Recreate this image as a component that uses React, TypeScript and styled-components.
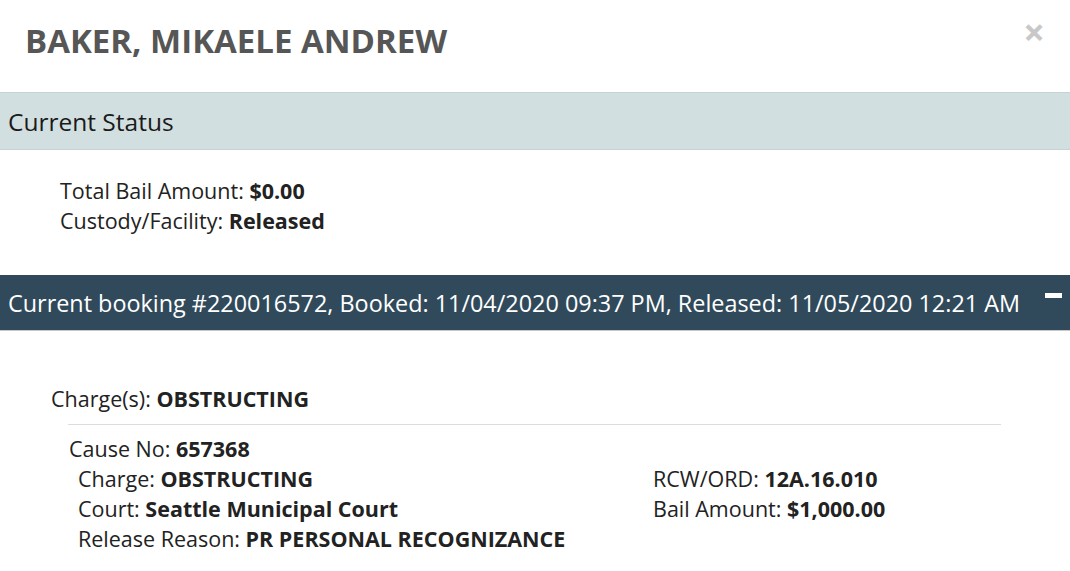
import styled, { createGlobalStyle } from 'styled-components';

const GlobalStyle = createGlobalStyle`
  html, body {
    margin: 0;
    padding: 0;
    background: #ffffff;
  }
  body {
    font-family: 'Open Sans', 'DejaVu Sans', sans-serif;
    color: #222222;
  }
`;

const Modal = styled.div`
  width: 1070px;
  height: 571px;
  overflow: hidden;
  background: #ffffff;
`;

const Header = styled.header`
  height: 93px;
  display: flex;
  align-items: center;
  justify-content: space-between;
  padding: 0 25px;
  box-sizing: border-box;
  border-bottom: 1px solid #c5d3d4;
`;

const Title = styled.h1`
  margin: 0 0 11px 0;
  font-size: 33px;
  font-weight: 700;
  color: #565656;
`;

const Close = styled.button`
  border: 0;
  background: none;
  padding: 0;
  margin: 0 0 30px 0;
  font-family: 'Open Sans', sans-serif;
  font-size: 38px;
  font-weight: 700;
  line-height: 1;
  color: #c8c8c8;
  cursor: pointer;
`;

const SectionBar = styled.div<{ $dark?: boolean }>`
  display: flex;
  align-items: center;
  justify-content: space-between;
  box-sizing: border-box;
  height: ${({ $dark }) => ($dark ? '56px' : '57px')};
  padding: 0 8px;
  background: ${({ $dark }) => ($dark ? '#304a5b' : '#d2dfe0')};
  color: ${({ $dark }) => ($dark ? '#ffffff' : '#1a1a1a')};
  border-bottom: 1px solid ${({ $dark }) => ($dark ? '#c8c8c8' : '#c5d3d4')};
  font-size: ${({ $dark }) => ($dark ? '23.4px' : '24.5px')};
`;

const Minus = styled.span`
  display: block;
  width: 17px;
  height: 5px;
  margin: 0 0 14px 0;
  background: #ffffff;
`;

const StatusBody = styled.div`
  height: 125px;
  padding: 26px 0 0 60px;
  box-sizing: border-box;
`;

const Line = styled.div`
  font-size: 21.5px;
  line-height: 30px;

  b {
    font-weight: 700;
  }
`;

const BookingBody = styled.div`
  padding: 53px 0 0 51px;
`;

const Divider = styled.hr`
  margin: 10px 0 9px 17px;
  width: 933px;
  border: 0;
  border-top: 1px solid #dddddd;
`;

const CauseBlock = styled.div`
  padding-left: 18px;
`;

const Columns = styled.div`
  display: grid;
  grid-template-columns: 575px 1fr;
  padding-left: 9px;
`;

const Column = styled.div``;

export default function App() {
  return (
    <Modal>
      <GlobalStyle />
      <Header>
        <Title>BAKER, MIKAELE ANDREW</Title>
        <Close aria-label="Close">×</Close>
      </Header>
      <SectionBar>Current Status</SectionBar>
      <StatusBody>
        <Line>
          Total Bail Amount: <b>$0.00</b>
        </Line>
        <Line>
          Custody/Facility: <b>Released</b>
        </Line>
      </StatusBody>
      <SectionBar $dark>
        <span>
          Current booking #220016572, Booked: 11/04/2020 09:37 PM, Released:
          11/05/2020 12:21 AM
        </span>
        <Minus />
      </SectionBar>
      <BookingBody>
        <Line>
          Charge(s): <b>OBSTRUCTING</b>
        </Line>
        <Divider />
        <CauseBlock>
          <Line>
            Cause No: <b>657368</b>
          </Line>
          <Columns>
            <Column>
              <Line>
                Charge: <b>OBSTRUCTING</b>
              </Line>
              <Line>
                Court: <b>Seattle Municipal Court</b>
              </Line>
              <Line>
                Release Reason: <b>PR PERSONAL RECOGNIZANCE</b>
              </Line>
            </Column>
            <Column>
              <Line>
                RCW/ORD: <b>12A.16.010</b>
              </Line>
              <Line>
                Bail Amount: <b>$1,000.00</b>
              </Line>
            </Column>
          </Columns>
        </CauseBlock>
      </BookingBody>
    </Modal>
  );
}
